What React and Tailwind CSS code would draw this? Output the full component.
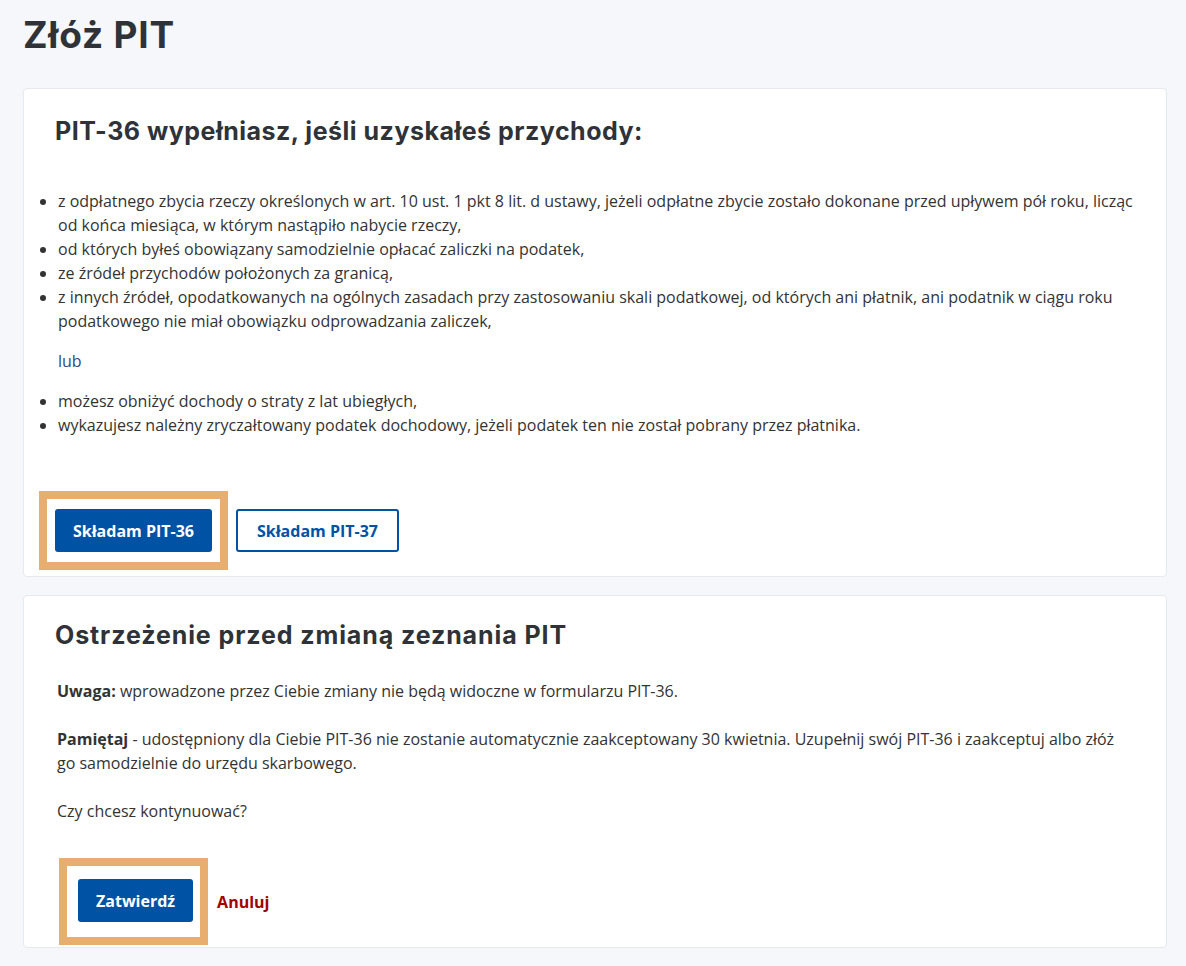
import React from 'react';

const body = { fontFamily: '"Open Sans", "Liberation Sans", sans-serif' };
const head = { fontFamily: 'Inter, "Open Sans", sans-serif' };

const Frame = ({ className, children }) => (
    <div className={`border-8 border-[#e8ae6f] ${className}`}>{children}</div>
);

export default function App() {
    return (
        <div className="min-h-screen bg-[#f5f7fb] pl-[23px] pr-[19px] pt-[12px] pb-4 text-[#333]" style={body}>
            <h1 className="text-[37px] leading-[46px] font-bold text-[#2f3237] tracking-[0.8px]" style={head}>
                Złóż PIT
            </h1>

            <div className="mt-[30px] bg-white border border-[#e6e9ee] rounded-[4px] pl-[15px] pr-4 pt-[26px] pb-[6px]">
                <h2 className="pl-4 text-[25px] leading-[32px] font-bold text-[#2f3237] tracking-[0.5px]" style={head}>
                    PIT-36 wypełniasz, jeśli uzyskałeś przychody:
                </h2>

                <ul className="mt-[42px] list-disc pl-[19px] text-[16px] leading-[24px]">
                    <li>z odpłatnego zbycia rzeczy określonych w art. 10 ust. 1 pkt 8 lit. d ustawy, jeżeli odpłatne zbycie zostało dokonane przed upływem pół roku, licząc od końca miesiąca, w którym nastąpiło nabycie rzeczy,</li>
                    <li>od których byłeś obowiązany samodzielnie opłacać zaliczki na podatek,</li>
                    <li>ze źródeł przychodów położonych za granicą,</li>
                    <li>z innych źródeł, opodatkowanych na ogólnych zasadach przy zastosowaniu skali podatkowej, od których ani płatnik, ani podatnik w ciągu roku podatkowego nie miał obowiązku odprowadzania zaliczek,</li>
                </ul>
                <p className="mt-4 pl-[19px] text-[16px] leading-[24px] text-[#2a4c74]">lub</p>
                <ul className="mt-4 list-disc pl-[19px] text-[16px] leading-[24px]">
                    <li>możesz obniżyć dochody o straty z lat ubiegłych,</li>
                    <li>wykazujesz należny zryczałtowany podatek dochodowy, jeżeli podatek ten nie został pobrany przez płatnika.</li>
                </ul>

                <div className="mt-[54px] flex items-center gap-2">
                    <Frame className="px-2 py-[10px]">
                        <button className="h-[43px] px-[18px] rounded-[3px] bg-[#0052a5] text-white text-[16px] font-bold">
                            Składam PIT-36
                        </button>
                    </Frame>
                    <button className="h-[43px] px-[19px] rounded-[3px] border-2 border-[#0052a5] bg-white text-[#0052a5] text-[16px] font-bold">
                        Składam PIT-37
                    </button>
                </div>
            </div>

            <div className="mt-[18px] bg-white border border-[#e6e9ee] rounded-[4px] pl-[15px] pr-4 pt-[23px] pb-[2px]">
                <h2 className="pl-4 text-[25px] leading-[32px] font-bold text-[#2f3237] tracking-[0.9px]" style={head}>
                    Ostrzeżenie przed zmianą zeznania PIT
                </h2>
                <div className="mt-[28px] pl-[18px] pr-[30px] text-[16px] leading-[24px]">
                    <p><b>Uwaga:</b> wprowadzone przez Ciebie zmiany nie będą widoczne w formularzu PIT-36.</p>
                    <p className="mt-6"><b>Pamiętaj</b> - udostępniony dla Ciebie PIT-36 nie zostanie automatycznie zaakceptowany 30 kwietnia. Uzupełnij swój PIT-36 i zaakceptuj albo złóż go samodzielnie do urzędu skarbowego.</p>
                    <p className="mt-6">Czy chcesz kontynuować?</p>
                </div>
                <div className="mt-[35px] pl-[20px] flex items-center gap-[9px]">
                    <Frame className="pl-[11px] pr-[7px] pt-[13px] pb-[15px]">
                        <button className="h-[43px] px-[18px] rounded-[3px] bg-[#0052a5] text-white text-[16px] font-bold">
                            Zatwierdź
                        </button>
                    </Frame>
                    <a className="text-[16px] font-bold text-[#a30000]">Anuluj</a>
                </div>
            </div>
        </div>
    );
}
